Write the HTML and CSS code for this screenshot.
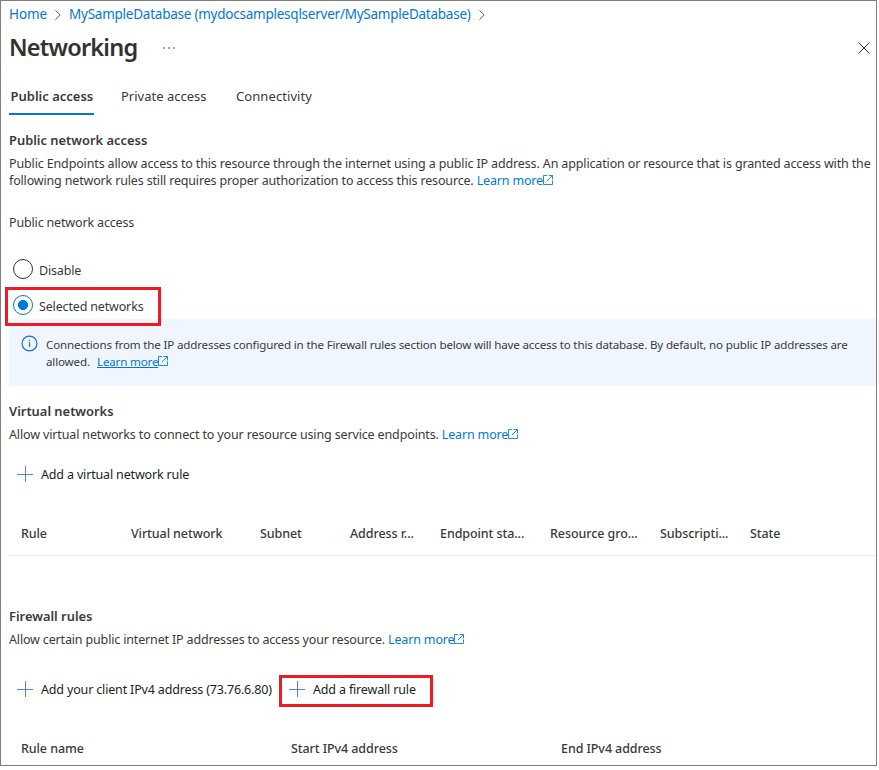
FILE: index.html
```html
<!DOCTYPE html>
<html lang="en">
<head>
<meta charset="utf-8">
<title>Networking</title>
<link rel="stylesheet" href="styles.css">
</head>
<body>
<svg class="defs" width="0" height="0" aria-hidden="true">
  <symbol id="ext" viewBox="0 0 10 10"><path d="M4 .5H.5v9h9V5.500M5.500 .5h4V4.500M9.500 .5L4 6" fill="none" stroke="currentColor" stroke-width=".85"/></symbol>
  <symbol id="plus" viewBox="0 0 16 16"><path d="M0 8.500H16M8.500 0V16" fill="none" stroke="currentColor"/></symbol>
  <symbol id="chev" viewBox="0 0 6 10"><path d="M.5 .5L5.200 5L.5 9.500" fill="none" stroke="currentColor"/></symbol>
</svg>
<main class="blade">
  <nav class="breadcrumb">
    <a class="crumb-home">Home</a>
    <svg class="chev"><use href="#chev"/></svg>
    <a class="crumb-db">MySampleDatabase (mydocsamplesqlserver/MySampleDatabase)</a>
    <svg class="chev"><use href="#chev"/></svg>
  </nav>
  <header class="title-row">
    <h1>Networking</h1>
    <svg class="more" viewBox="0 0 12 2"><path d="M0 1h2M5 1h2M10 1h2" stroke="#555" stroke-width="1.200"/></svg>
    <svg class="close" viewBox="0 0 12 12"><path d="M.3 .3L11.700 11.700M11.700 .3L.3 11.700" stroke="#323130" fill="none"/></svg>
  </header>
  <div class="tabs">
    <span class="tab active">Public access</span>
    <span class="tab private">Private access</span>
    <span class="tab conn">Connectivity</span>
  </div>

  <section class="public">
    <h2>Public network access</h2>
    <p><span class="lead">Public Endpoints allow access to this resource through the internet using a public IP address. An application or resource that is granted access with the</span><br>following network rules still requires proper authorization to access this resource. <a>Learn more<svg class="ext"><use href="#ext"/></svg></a></p>
    <div class="field-label">Public network access</div>
    <div class="radio"><i class="dot"></i><span>Disable</span></div>
    <div class="radio selected"><i class="dot on"></i><span>Selected networks</span></div>
    <div class="info">
      <svg class="info-icon" viewBox="0 0 16 16"><circle cx="8" cy="8" r="7" fill="none" stroke="#1a6fe0" stroke-width="1.100"/><path d="M8 6.800V11.300M8 4.400V5.600" stroke="#1a6fe0" stroke-width="1.100"/></svg>
      <div><span>Connections from the IP addresses configured in the Firewall rules section below will have access to this database. By default, no public IP addresses are</span><br><span class="info-end">allowed.</span><a><u>Learn more</u><svg class="ext"><use href="#ext"/></svg></a></div>
    </div>
  </section>

  <section class="virtual">
    <h2>Virtual networks</h2>
    <p><span class="lead">Allow virtual networks to connect to your resource using service endpoints.</span> <a>Learn more<svg class="ext"><use href="#ext"/></svg></a></p>
    <div class="commands"><span class="cmd"><svg class="plus"><use href="#plus"/></svg><span>Add a virtual network rule</span></span></div>
    <div class="thead vnet">
      <span>Rule</span><span>Virtual network</span><span>Subnet</span><span>Address r...</span><span>Endpoint sta...</span><span>Resource gro...</span><span>Subscripti...</span><span>State</span>
    </div>
  </section>

  <section class="firewall">
    <h2>Firewall rules</h2>
    <p>Allow certain public internet IP addresses to access your resource. <a>Learn more<svg class="ext"><use href="#ext"/></svg></a></p>
    <div class="commands"><span class="cmd client"><svg class="plus"><use href="#plus"/></svg><span>Add your client IPv4 address (73.76.6.80)</span></span><span class="cmd boxed"><svg class="plus"><use href="#plus"/></svg><span>Add a firewall rule</span></span></div>
    <div class="thead fw"><span>Rule name</span><span>Start IPv4 address</span><span>End IPv4 address</span></div>
  </section>
</main>
</body>
</html>
```

FILE: styles.css
```css
*, *::after { box-sizing: border-box; }
body { margin: 0; background: #fff; font: 12.5px/17px "Noto Sans", "Open Sans", sans-serif; letter-spacing: -.16px; color: #3b3a39; }
.defs { position: absolute; }
svg { display: block; flex: none; }
h1, h2, p { margin: 0; white-space: nowrap; }
span, a { white-space: nowrap; }
a { color: #0078d4; }

.blade { width: 877px; height: 766px; border: 1px solid #7f7f7f; padding-left: 8px; overflow: hidden; }

.breadcrumb { display: flex; align-items: center; height: 27px; font-size: 13.5px; letter-spacing: -.24px; }
.crumb-home { width: 46px; letter-spacing: -.1px; }
.chev { width: 6px; height: 10px; margin-top: 1px; color: #666; }
.crumb-db { width: 402px; margin-left: 8px; margin-right: 8px; }

.title-row { display: flex; align-items: center; height: 40px; padding-right: 6px; }
h1 { width: 154px; margin-bottom: 2px; font-size: 23.5px; line-height: 32px; font-weight: 600; letter-spacing: -.8px; color: #323130; }
.more { width: 12px; height: 2px; }
.close { width: 12px; height: 12px; margin-left: auto; }

.tabs { display: flex; height: 47px; padding-top: 17px; font-size: 13px; letter-spacing: 0; }
.tab { height: 30px; line-height: 23px; }
.active { width: 85px; padding-left: 1.5px; margin-right: 27px; border-bottom: 2px solid #0078d4; font-weight: 600; }
.private { width: 115px; }
.conn { letter-spacing: .08px; }

h2 { height: 17px; font-size: 12.9px; line-height: 17px; font-weight: 600; letter-spacing: 0; }
.public { padding-top: 17px; }
.public p { margin-top: 6px; }
.ext { display: inline-block; width: 10px; height: 10px; vertical-align: 0; }
.field-label { margin-top: 25px; margin-bottom: 28px; }
.radio { display: flex; height: 20px; padding-left: 4px; position: relative; line-height: 24px; }
.dot { width: 20px; height: 20px; margin-right: 6px; border: 1px solid #323130; border-radius: 50%; }
.dot.on { border-color: #0078d4; background: radial-gradient(circle, #0078d4 4.7px, transparent 5.3px); }
.radio.selected { margin-top: 16px; }
.radio.selected::after { content: ""; position: absolute; left: -4px; top: -8px; width: 156px; height: 39px; border: 3px solid #ed1c24; }
.info { display: flex; height: 67px; margin-top: 4px; padding: 17px 0 0 12px; background: #f0f6ff; font-size: 11.6px; letter-spacing: -.167px; }
.info-icon { width: 17px; height: 17px; margin: -1px 8px 0 0; }
.info-end { display: inline-block; width: 51px; }

.virtual { padding-top: 17px; }
.virtual p, .firewall p { margin-top: 6px; }
.lead { letter-spacing: -.14px; }
.commands { display: flex; margin-top: 23px; height: 17px; }
.cmd { display: flex; padding-left: 8px; color: #201f1e; }
.plus { width: 16px; height: 16px; margin-right: 8px; color: #5583d5; }
.thead { display: grid; padding-left: 12px; margin-top: 42px; height: 31px; font-weight: 500; letter-spacing: -.08px; }
.thead.vnet { grid-template-columns: 110px 129px 90px 90px 110px 110px 90px 1fr; border-bottom: 1px solid #edebe9; }
.firewall { padding-top: 52px; }
.firewall .commands { margin-top: 33px; }
.client { width: 272px; }
.boxed { position: relative; }
.boxed::after { content: ""; position: absolute; left: -2px; top: -6px; width: 154px; height: 32px; border: 3px solid #ed1c24; }
.thead.fw { grid-template-columns: 270px 270px 1fr; }
```
